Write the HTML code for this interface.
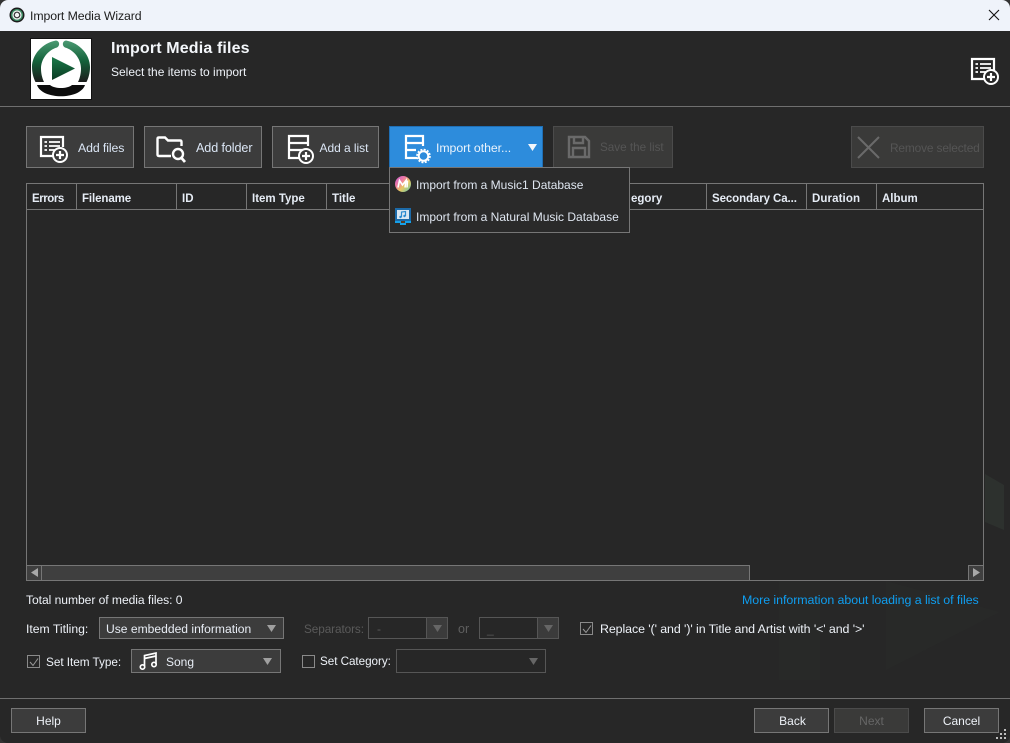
<!DOCTYPE html>
<html><head><meta charset="utf-8">
<style>
html,body{margin:0;padding:0;width:1010px;height:743px;overflow:hidden;background:#333}
*{box-sizing:border-box}
body{font-family:"Liberation Sans",sans-serif;font-size:12px;color:#f2f2f2}
#win{position:absolute;left:0;top:0;width:1010px;height:743px;background:#272727;border-radius:8px;overflow:hidden}
.a{position:absolute}
.t{position:absolute;white-space:nowrap;line-height:16px}
.btn{position:absolute;background:#3c3c3c;border:1px solid #767676}
.dis{background:#3a3a39;border-color:#4b4b4b}
.hl{position:absolute;background:#6f6f6f;height:1px}
.b{font-weight:bold;font-size:11.5px;color:#e6ecf5}
.dd{position:absolute;border:1px solid #767676;background:#3c3c3c}
svg{position:absolute;overflow:visible}
.cb{position:absolute;width:13px;height:13px;border:1px solid #8a8a8a}
</style></head><body>
<div id="win">
<!-- watermark -->
<svg class="a" style="left:0;top:0" width="1010" height="743"><path d="M985 474L1004 485V530L985 522Z" fill="#2d312e"/><path d="M779 581H820V680H779Z" fill="#282928"/><path d="M886 581L1000 612L886 670Z" fill="#282928"/></svg>

<!-- title bar -->
<div class="a" style="left:0;top:0;width:1010px;height:31px;background:#eff3fa"></div>
<svg style="left:9px;top:7px" width="16" height="16" viewBox="0 0 16 16"><circle cx="8" cy="8" r="7.5" fill="#1b1b1b"/><circle cx="8" cy="8" r="6" fill="#3c8a63"/><circle cx="8" cy="8" r="4.6" fill="#f5f5f5"/><circle cx="8" cy="8" r="2.8" fill="none" stroke="#333" stroke-width="1.2"/></svg>
<div class="t" style="left:30px;top:8px;color:#1c1c1c;font-size:12.3px;letter-spacing:-.1px">Import Media Wizard</div>
<svg style="left:988px;top:9px" width="12" height="12" viewBox="0 0 12 12"><path d="M1 1L11 11M11 1L1 11" stroke="#111" stroke-width="1.1" fill="none"/></svg>

<!-- header -->
<div class="a" style="left:30px;top:38px;width:62px;height:62px;background:#fff;border:1px solid #111"></div>
<svg style="left:30px;top:38px" width="62" height="62" viewBox="0 0 62 62">
<defs><linearGradient id="g" x1="0" y1="0" x2="0" y2="1"><stop offset="0" stop-color="#4b9a72"/><stop offset=".5" stop-color="#13613a"/><stop offset="1" stop-color="#1c1c1c"/></linearGradient>
<linearGradient id="g2" x1="0" y1="0" x2="0" y2="1"><stop offset="0" stop-color="#1a7a4a"/><stop offset="1" stop-color="#0b3a22"/></linearGradient></defs>
<path d="M26 2.500C12 5 2 17 2 29C2 35 3.500 40 5.500 44H14C12 40 11 35 11 30.500C11 21 18 12 27 9.500C30 8 30 3 26 2.500Z" fill="url(#g)"/>
<path d="M36 2.500C50 5 60 17 60 29C60 35 58.500 40 56.500 44H48C50 40 51 35 51 30.500C51 21 44 12 35 9.500C32 8 32 3 36 2.500Z" fill="url(#g)"/>
<path d="M7 47H20C25 51 37 51 42 47H55C50 62 12 62 7 47Z" fill="#0c0c0c"/>
<path d="M22 19L45 30.500L22 42Z" fill="url(#g2)"/>
</svg>
<div class="t" style="left:111px;top:41px;font-weight:bold;font-size:16px;color:#f4f7fb;letter-spacing:.15px">Import Media files</div>
<div class="t" style="left:111px;top:64px;color:#eef2f8;font-size:12px">Select the items to import</div>
<svg style="left:971px;top:58px" width="28" height="27" viewBox="0 0 28 27" fill="none" stroke="#fff"><path d="M14 21H1V1H23V12" stroke-width="2.200"/><path d="M4.500 6H7M9 6H20M4.500 10H7M9 10H20M4.500 14H7M9 14H15" stroke-width="1.700"/><circle cx="20" cy="19" r="7" stroke-width="2" fill="#272727"/><path d="M20 15V23M16 19H24" stroke-width="2.200"/></svg>
<div class="hl" style="left:0;top:106px;width:1010px"></div>

<!-- toolbar -->
<div class="btn" style="left:26px;top:126px;width:108px;height:42px"></div>
<svg style="left:40px;top:136px" width="28" height="27" viewBox="0 0 28 27" fill="none" stroke="#fff"><path d="M14 20H1V1H23V11" stroke-width="2.200"/><path d="M4.500 6H7M9 6H20M4.500 10H7M9 10H20M4.500 14H7M9 14H15" stroke-width="1.700"/><circle cx="20" cy="19" r="7" stroke-width="2" fill="#3c3c3c"/><path d="M20 15V23M16 19H24" stroke-width="2.200"/></svg>
<div class="t" style="left:78px;top:140px;color:#dbe6f5;font-size:12.3px;letter-spacing:-.1px">Add files</div>

<div class="btn" style="left:144px;top:126px;width:118px;height:42px"></div>
<svg style="left:156px;top:136px" width="30" height="28" viewBox="0 0 30 28" fill="none" stroke="#fff" stroke-width="2.400"><path d="M15 20H3Q1.500 20 1.500 18.500V3Q1.500 1.500 3 1.500H9L12 4.500H24Q25.500 4.500 25.500 6V10"/><circle cx="22" cy="18" r="5" stroke-width="2.400"/><path d="M25.500 22L29 26" stroke-width="2.800"/></svg>
<div class="t" style="left:196px;top:140px;color:#dbe6f5;font-size:12.6px;letter-spacing:-.1px">Add folder</div>

<div class="btn" style="left:272px;top:126px;width:107px;height:42px"></div>
<svg style="left:288px;top:135px" width="28" height="28" viewBox="0 0 28 28" fill="none" stroke="#fff" stroke-width="2.200"><path d="M13 23H1V1H20V11M1 8H20M1 15H15"/><circle cx="18" cy="21" r="7" stroke-width="2" fill="#3c3c3c"/><path d="M18 17V25M14 21H22"/></svg>
<div class="t" style="left:319.500px;top:140px;color:#dbe6f5;letter-spacing:-.05px">Add a list</div>

<div class="a" style="left:389px;top:126px;width:154px;height:42px;background:#2d8cdc;border:1px solid #1f6fb5"></div>
<svg style="left:405px;top:135px" width="26" height="28" viewBox="0 0 26 28" fill="none" stroke="#fff" stroke-width="2.200"><path d="M12 23H1V1H18V11M1 8H18M1 15H11"/><circle cx="18.500" cy="21" r="4.800" stroke-width="2"/><circle cx="18.500" cy="21" r="6.500" stroke-width="1.600" stroke-dasharray="2 1.400"/></svg>
<div class="t" style="left:436px;top:140px;color:#eaf3fc;font-size:12.3px;letter-spacing:-.05px">Import other...</div>
<svg style="left:528px;top:144px" width="9" height="7"><path d="M0 0H9L4.500 7Z" fill="#f2f6fb"/></svg>

<div class="btn dis" style="left:553px;top:126px;width:120px;height:42px"></div>
<svg style="left:568px;top:136px" width="22" height="22" viewBox="0 0 22 22" fill="none" stroke="#6a6a6a" stroke-width="2.400"><path d="M1 1H17L21 5V21H1Z"/><path d="M6 1V7H15V1M5 21V12H17V21"/></svg>
<div class="t" style="left:600px;top:140px;color:#555;font-size:11.7px">Save the list</div>

<div class="btn dis" style="left:851px;top:126px;width:133px;height:42px"></div>
<svg style="left:858px;top:137px" width="21" height="21"><path d="M0 0L21 21M21 0L0 21" stroke="#6a6a6a" stroke-width="2"/></svg>
<div class="t" style="left:890px;top:140px;color:#555;font-size:11.9px;letter-spacing:-.15px">Remove selected</div>

<!-- table -->
<div class="a" style="left:26px;top:183px;width:958px;height:398px;border:1px solid #767676"></div>
<div class="hl" style="left:26px;top:209px;width:958px;background:#767676"></div>
<div class="a" style="left:76px;top:183px;width:1px;height:27px;background:#767676"></div>
<div class="a" style="left:176px;top:183px;width:1px;height:27px;background:#767676"></div>
<div class="a" style="left:246px;top:183px;width:1px;height:27px;background:#767676"></div>
<div class="a" style="left:326px;top:183px;width:1px;height:27px;background:#767676"></div>
<div class="a" style="left:706px;top:183px;width:1px;height:27px;background:#767676"></div>
<div class="a" style="left:806px;top:183px;width:1px;height:27px;background:#767676"></div>
<div class="a" style="left:876px;top:183px;width:1px;height:27px;background:#767676"></div>
<div class="t b" style="left:32px;top:191px;letter-spacing:-.45px">Errors</div>
<div class="t b" style="left:82px;top:191px;letter-spacing:-.1px">Filename</div>
<div class="t b" style="left:182px;top:191px">ID</div>
<div class="t b" style="left:252px;top:191px">Item Type</div>
<div class="t b" style="left:332px;top:191px">Title</div>
<div class="t b" style="left:631px;top:191px">egory</div>
<div class="t b" style="left:712px;top:191px;letter-spacing:-.1px">Secondary Ca...</div>
<div class="t b" style="left:812px;top:191px;letter-spacing:.1px">Duration</div>
<div class="t b" style="left:882px;top:191px">Album</div>

<!-- scrollbar -->
<div class="a" style="left:27px;top:565px;width:723px;height:15px;background:#3f3f3f;border:1px solid #767676;border-bottom:0"></div>
<div class="a" style="left:27px;top:565px;width:15px;height:15px;background:#3f3f3f;border:1px solid #767676;border-left:0;border-bottom:0"></div>
<svg style="left:31px;top:568px" width="7" height="9"><path d="M7 0V9L0 4.500Z" fill="#a8a8a8"/></svg>
<div class="a" style="left:968px;top:565px;width:15px;height:15px;background:#3f3f3f;border:1px solid #767676;border-right:0;border-bottom:0"></div>
<svg style="left:973px;top:568px" width="7" height="9"><path d="M0 0V9L7 4.500Z" fill="#a8a8a8"/></svg>

<!-- menu -->
<div class="a" style="left:389px;top:167px;width:241px;height:66px;background:#2a2a2a;border:1px solid #767676"></div>
<svg style="left:395px;top:176px" width="16" height="16" viewBox="0 0 16 16"><defs><linearGradient id="m" x1="0" y1="0" x2="1" y2="1"><stop offset="0" stop-color="#c05ad8"/><stop offset=".35" stop-color="#f07aa0"/><stop offset=".6" stop-color="#e8c860"/><stop offset="1" stop-color="#58c8b8"/></linearGradient></defs><circle cx="8" cy="8" r="8" fill="url(#m)"/><path d="M3 11.500L4.500 4.500L7.500 9L11 4.500L10 11.500M12.500 4.500L12 11.500" fill="none" stroke="#fff" stroke-width="1.600"/></svg>
<div class="t" style="left:416px;top:177px;color:#dfe6f0;font-size:12px">Import from a Music1 Database</div>
<svg style="left:395px;top:208px" width="16" height="17" viewBox="0 0 16 17"><rect x="0" y="0" width="16" height="13" fill="#1c6aa8"/><rect x="2" y="2" width="12" height="9" fill="#d8e6f2"/><path d="M6.500 9V4L10.500 3.500V8" fill="none" stroke="#2a8ad0" stroke-width="1.200"/><circle cx="5.500" cy="9" r="1.200" fill="#2a8ad0"/><circle cx="9.500" cy="8" r="1.200" fill="#2a8ad0"/><path d="M0 13H16V15H11V17H5V15H0Z" fill="#16a0e8"/><rect x="6" y="13" width="4" height="2" fill="#5a3a20"/></svg>
<div class="t" style="left:416px;top:209px;color:#dfe6f0;font-size:12px">Import from a Natural Music Database</div>

<!-- bottom info -->
<div class="t" style="left:26px;top:592px;font-size:12.1px;color:#eef2f8;letter-spacing:-.05px">Total number of media files: 0</div>
<div class="t" style="left:742px;top:592px;color:#0f9ef0;font-size:12.4px;letter-spacing:-.05px">More information about loading a list of files</div>

<div class="t" style="left:26px;top:621px;font-size:12.2px;color:#eef2f8">Item Titling:</div>
<div class="dd" style="left:99px;top:617px;width:185px;height:22px"></div>
<div class="t" style="left:106px;top:621px;font-size:12.1px;color:#e8edf5">Use embedded information</div>
<svg style="left:267px;top:625px" width="9" height="7"><path d="M0 0H9L4.500 7Z" fill="#a0a0a0"/></svg>

<div class="t" style="left:304px;top:621px;color:#5a5a5a;font-size:11.8px;letter-spacing:-.1px">Separators:</div>
<div class="a" style="left:368px;top:617px;width:80px;height:22px;border:1px solid #565656"></div>
<div class="a" style="left:426px;top:617px;width:22px;height:22px;background:#3b3b3b;border:1px solid #565656"></div>
<div class="t" style="left:377px;top:621px;color:#5a5a5a">-</div>
<svg style="left:433px;top:625px" width="9" height="7"><path d="M0 0H9L4.500 7Z" fill="#666"/></svg>
<div class="t" style="left:458px;top:621px;color:#5f5f5f;font-size:12.5px">or</div>
<div class="a" style="left:479px;top:617px;width:80px;height:22px;border:1px solid #565656"></div>
<div class="a" style="left:537px;top:617px;width:22px;height:22px;background:#3b3b3b;border:1px solid #565656"></div>
<div class="t" style="left:487px;top:621px;color:#5a5a5a">_</div>
<svg style="left:544px;top:625px" width="9" height="7"><path d="M0 0H9L4.500 7Z" fill="#666"/></svg>

<div class="cb" style="left:580px;top:622px"></div>
<svg style="left:582px;top:625px" width="10" height="9"><path d="M1 4L4 7.500L9 .5" fill="none" stroke="#9a9a9a" stroke-width="1"/></svg>
<div class="t" style="left:600px;top:621px;color:#eef2f8;font-size:12.4px;letter-spacing:-.08px">Replace '(' and ')' in Title and Artist with '&lt;' and '&gt;'</div>

<div class="cb" style="left:27px;top:655px"></div>
<svg style="left:29px;top:658px" width="10" height="9"><path d="M1 4L4 7.500L9 .5" fill="none" stroke="#9a9a9a" stroke-width="1"/></svg>
<div class="t" style="left:46px;top:654px;font-size:11.8px;color:#eef2f8;letter-spacing:-.05px">Set Item Type:</div>
<div class="dd" style="left:131px;top:649px;width:150px;height:24px"></div>
<svg style="left:139px;top:652px" width="20" height="18" viewBox="0 0 20 18" fill="none" stroke="#fff" stroke-width="1.700"><path d="M5.500 14V3.500L17 1V12M5.500 6.500L17 4"/><circle cx="3.500" cy="15" r="2.200"/><circle cx="15" cy="12.500" r="2.200"/></svg>
<div class="t" style="left:166px;top:654px;color:#e8edf5;font-size:12px">Song</div>
<svg style="left:263px;top:658px" width="9" height="7"><path d="M0 0H9L4.500 7Z" fill="#a0a0a0"/></svg>

<div class="cb" style="left:302px;top:655px"></div>
<div class="t" style="left:320px;top:654px;font-size:11.7px;color:#eef2f8;letter-spacing:-.05px">Set Category:</div>
<div class="a" style="left:396px;top:649px;width:150px;height:24px;border:1px solid #565656"></div>
<svg style="left:529px;top:658px" width="9" height="7"><path d="M0 0H9L4.500 7Z" fill="#666"/></svg>

<div class="hl" style="left:0;top:698px;width:1010px"></div>

<!-- footer buttons -->
<div class="btn" style="left:11px;top:708px;width:75px;height:25px"></div>
<div class="t" style="left:11px;top:713px;width:75px;text-align:center;color:#eef2f8">Help</div>
<div class="btn" style="left:754px;top:708px;width:75px;height:25px"></div>
<div class="t" style="left:755px;top:713px;width:75px;text-align:center;color:#eef2f8">Back</div>
<div class="btn dis" style="left:834px;top:708px;width:75px;height:25px"></div>
<div class="t" style="left:834px;top:713px;width:75px;text-align:center;color:#666">Next</div>
<div class="btn" style="left:924px;top:708px;width:75px;height:25px"></div>
<div class="t" style="left:924px;top:713px;width:75px;text-align:center;color:#eef2f8">Cancel</div>

<svg style="left:996px;top:729px" width="12" height="12" fill="#bdbdbd"><rect x="8" y="0" width="2" height="2"/><rect x="8" y="4" width="2" height="2"/><rect x="4" y="4" width="2" height="2"/><rect x="8" y="8" width="2" height="2"/><rect x="4" y="8" width="2" height="2"/><rect x="0" y="8" width="2" height="2"/></svg>
</div>
</body></html>
